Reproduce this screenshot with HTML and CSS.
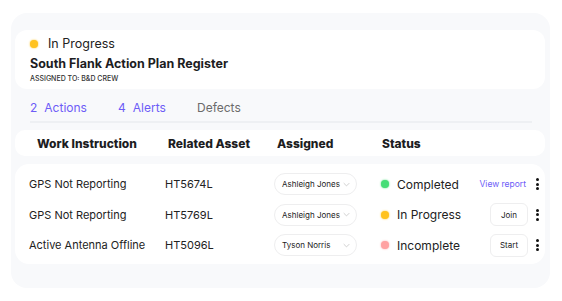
FILE: index.html
```html
<!DOCTYPE html>
<html lang="en">
<head>
    <meta charset="UTF-8">
    <meta name="viewport" content="width=device-width, initial-scale=1.0">
    <title>Action Plan Register</title>
    <link rel="stylesheet" href="styles.css">
</head>
<body>
    <div class="panel">
        <header class="summary">
            <div class="state"><span class="dot amber"></span>In Progress</div>
            <h1>South Flank Action Plan Register</h1>
            <p class="crew">ASSIGNED TO: B&amp;D CREW</p>
        </header>

        <nav class="tabs">
            <a class="tab active" href="#"><span>2</span>Actions</a>
            <a class="tab active" href="#"><span>4</span>Alerts</a>
            <a class="tab" href="#">Defects</a>
        </nav>

        <div class="table-head">
            <div>Work Instruction</div>
            <div>Related Asset</div>
            <div>Assigned</div>
            <div>Status</div>
        </div>

        <div class="table-body">
            <div class="row">
                <div>GPS Not Reporting</div>
                <div>HT5674L</div>
                <div><button class="pill">Ashleigh Jones<svg viewBox="0 0 10 6"><path d="M1 1l4 4 4-4"/></svg></button></div>
                <div class="status"><span class="dot green"></span>Completed</div>
                <div class="action"><a class="link" href="#">View report</a></div>
                <div class="kebab"><i></i><i></i><i></i></div>
            </div>
            <div class="row">
                <div>GPS Not Reporting</div>
                <div>HT5769L</div>
                <div><button class="pill">Ashleigh Jones<svg viewBox="0 0 10 6"><path d="M1 1l4 4 4-4"/></svg></button></div>
                <div class="status"><span class="dot amber"></span>In Progress</div>
                <div class="action"><button class="btn">Join</button></div>
                <div class="kebab"><i></i><i></i><i></i></div>
            </div>
            <div class="row">
                <div>Active Antenna Offline</div>
                <div>HT5096L</div>
                <div><button class="pill">Tyson Norris<svg viewBox="0 0 10 6"><path d="M1 1l4 4 4-4"/></svg></button></div>
                <div class="status"><span class="dot red"></span>Incomplete</div>
                <div class="action"><button class="btn">Start</button></div>
                <div class="kebab"><i></i><i></i><i></i></div>
            </div>
        </div>
    </div>
</body>
</html>
```

FILE: styles.css
```css
* {
    margin: 0;
    padding: 0;
    box-sizing: border-box;
}
body {
    font-family: Inter, "Open Sans", sans-serif;
    color: #1d1d1f;
    background: #fff;
}
.panel {
    width: 539px;
    height: 275px;
    margin: 13px 0 0 11px;
    padding: 17px 5px 0 4px;
    background: #f8f9fb;
    border-radius: 16px;
}
.summary {
    height: 59px;
    background: #fff;
    border-radius: 12px;
    padding: 6px 14px 0 15px;
}
.state {
    display: flex;
    align-items: center;
    font-size: 12.5px;
    line-height: 16px;
    color: #222;
}
.dot {
    width: 8px;
    height: 8px;
    border-radius: 50%;
    margin-right: 8px;
    flex-shrink: 0;
    box-shadow: 0 0 2px currentColor;
}
.dot.amber { background: #ffc21f; color: #ffc21f; }
.dot.green { background: #45dd76; color: #45dd76; }
.dot.red { background: #ffa2a2; color: #ffa2a2; }
.state .dot { margin-right: 10px; }
.summary h1 {
    font-size: 12.5px;
    font-weight: 700;
    line-height: 17px;
    margin-top: 3px;
}
.crew {
    font-size: 7px;
    font-weight: 500;
    color: #333;
    margin-top: 2px;
}
.tabs {
    display: flex;
    margin: 11px 13px 0 15px;
    padding-bottom: 5px;
    border-bottom: 2px solid #eef0f3;
    font-size: 12px;
    line-height: 16px;
}
.tab {
    text-decoration: none;
    color: #6b6b6b;
}
.tab.active { color: #6d5cf7; }
.tab span { margin-right: 7px; }
.tab:nth-child(1) { width: 88px; }
.tab:nth-child(2) { width: 79px; }
.table-head,
.row {
    display: grid;
    align-items: center;
}
.table-head {
    grid-template-columns: 131px 109px 105px auto;
    height: 26px;
    margin-top: 7px;
    padding-left: 22px;
    background: #fff;
    border-radius: 10px;
    font-size: 12px;
    font-weight: 800;
}
.table-body {
    margin-top: 8px;
    height: 100px;
    padding-top: 5px;
    background: #fff;
    border-radius: 14px;
}
.row {
    grid-template-columns: 136px 109px 107px 94px 53px auto;
    height: 30.5px;
    padding-left: 14px;
    font-size: 11px;
    color: #222;
}
.pill {
    display: flex;
    align-items: center;
    justify-content: space-between;
    width: 83px;
    height: 22px;
    padding: 0 6px 0 7px;
    border: 1px solid #eeeeef;
    border-radius: 11px;
    background: #fff;
    font-family: inherit;
    font-size: 8px;
    color: #222;
}
.pill svg {
    width: 7px;
    height: 5px;
    fill: none;
    stroke: #bbb;
    stroke-width: 1;
}
.status {
    display: flex;
    align-items: center;
    font-size: 12px;
}
.action {
    display: flex;
    justify-content: flex-end;
}
.link {
    font-size: 8.5px;
    color: #6d5cf7;
    text-decoration: none;
    margin-right: 2px;
}
.btn {
    width: 38px;
    height: 23px;
    border: 1px solid #eeeeef;
    border-radius: 6px;
    background: #fff;
    font-family: inherit;
    font-size: 8px;
    color: #222;
}
.kebab {
    display: flex;
    flex-direction: column;
    align-items: center;
    gap: 1.5px;
    width: 12px;
    margin-left: 3px;
}
.kebab i {
    width: 3px;
    height: 3px;
    border-radius: 50%;
    background: #111;
}
```
